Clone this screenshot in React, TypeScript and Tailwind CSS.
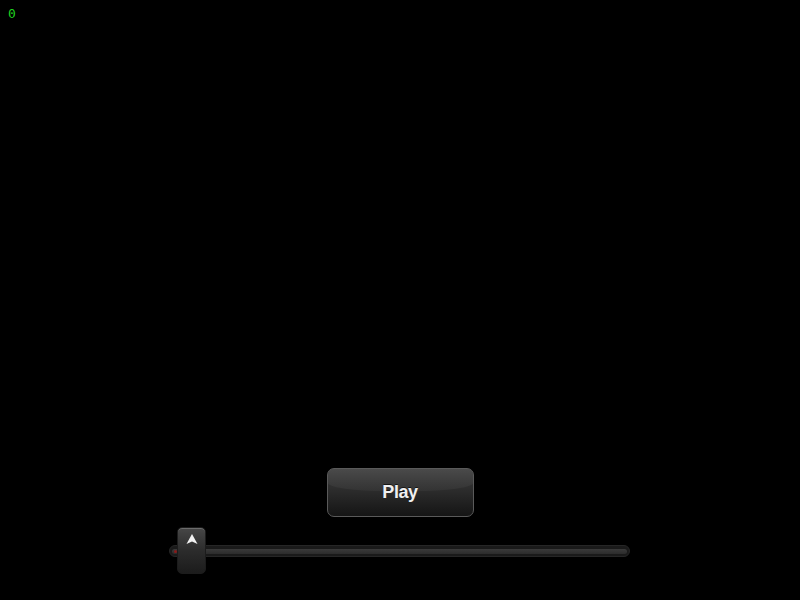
export default function App() {
  return (
    <div className="w-[800px] h-[600px] bg-black flex flex-col overflow-hidden">
      <div className="pl-[8px] pt-[6px] text-[13px] leading-[15px] text-[#1fd01f] font-['DejaVu_Sans_Mono',monospace]">
        0
      </div>
      <div className="flex-1" />
      <div className="flex flex-col items-center gap-[10px] pb-[26px]">
        <button className="relative w-[147px] h-[49px] rounded-[7px] border border-[#5a5a5a] bg-gradient-to-b from-[#3c3c3c] via-[#2a2a2a] to-[#151515] overflow-hidden shadow-[inset_0_1px_0_rgba(255,255,255,0.15)]">
          <span className="absolute left-0 right-0 top-0 h-[22px] bg-gradient-to-b from-[#4a4a4a] to-[#333333] rounded-b-[40%_8px]" />
          <span className="relative text-[18px] font-bold tracking-[-0.4px] text-[#f0f0f0] font-['Liberation_Sans',Arial,sans-serif] [text-shadow:0_-1px_0_rgba(0,0,0,0.6)]">
            Play
          </span>
        </button>
        <div className="relative w-[461px] h-[47px] flex items-center ml-[-1px]">
          <div className="relative w-full h-[12px] mt-[1px] rounded-full bg-[#1a1a1a] border border-[#262626] flex items-end px-[2px] pb-[2px]">
            <div className="w-full h-[5px] rounded-full bg-gradient-to-b from-[#3a3a3a] to-[#2c2c2c]" />
            <div className="absolute left-[4px] top-[4px] w-[3px] h-[3px] rounded-full bg-[#8a1a1a]" />
          </div>
          <div className="absolute left-[8px] top-0 w-[29px] h-[47px] rounded-[5px] border border-[#1c1c1c] bg-gradient-to-b from-[#474747] via-[#2c2c2c] to-[#1c1c1c] shadow-[inset_0_1px_0_rgba(255,255,255,0.2)] flex justify-center">
            <svg width="12" height="11" viewBox="0 0 12 11" className="mt-[6px]">
              <path d="M6 0 L11.5 10 L6 7.5 L0.5 10 Z" fill="#f2f2f2" />
            </svg>
          </div>
        </div>
      </div>
    </div>
  );
}
